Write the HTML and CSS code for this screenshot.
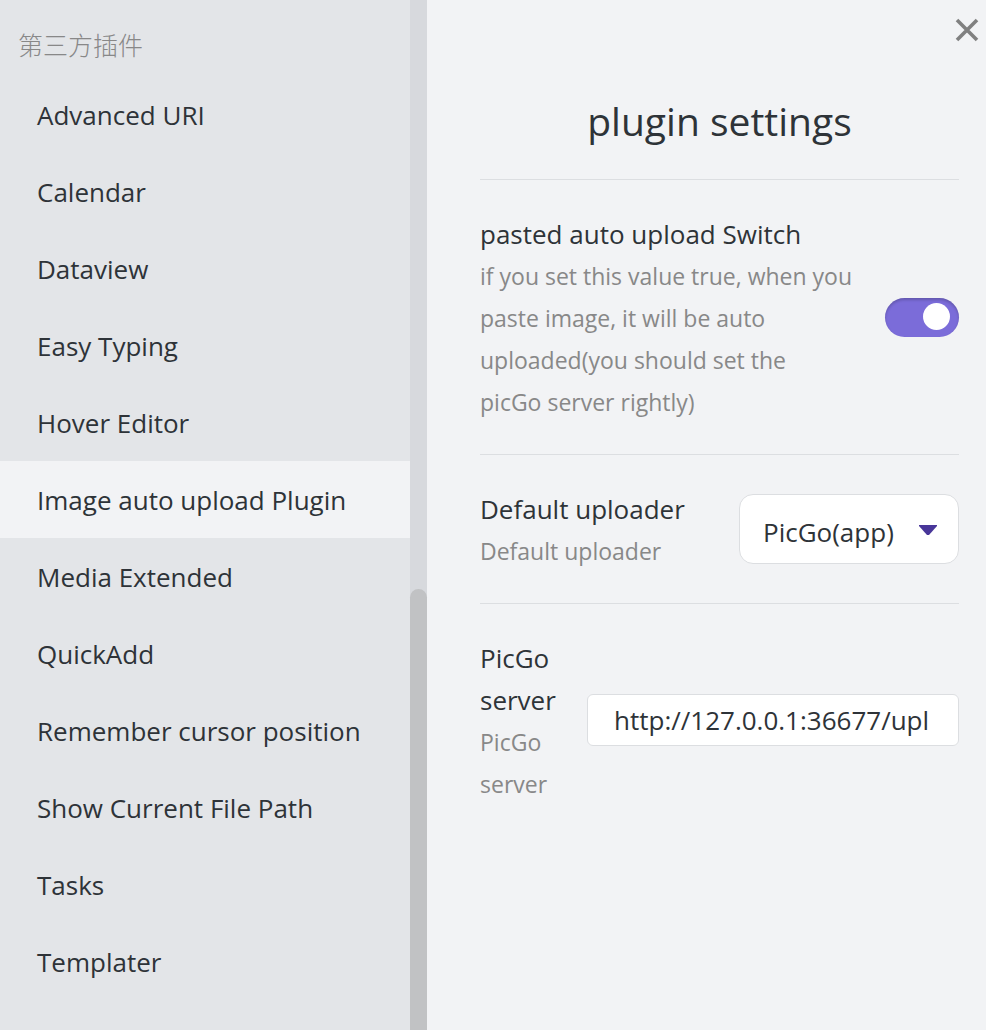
FILE: index.html
```html
<!DOCTYPE html>
<html lang="en">
<head>
<meta charset="utf-8">
<title>plugin settings</title>
<link rel="stylesheet" href="styles.css">
</head>
<body>
<div class="modal">
  <nav class="sidebar">
    <h2 class="group-title">第三方插件</h2>
    <a class="tab" href="#">Advanced URI</a>
    <a class="tab" href="#">Calendar</a>
    <a class="tab" href="#">Dataview</a>
    <a class="tab" href="#">Easy Typing</a>
    <a class="tab" href="#">Hover Editor</a>
    <a class="tab active" href="#">Image auto upload Plugin</a>
    <a class="tab" href="#">Media Extended</a>
    <a class="tab" href="#">QuickAdd</a>
    <a class="tab" href="#">Remember cursor position</a>
    <a class="tab" href="#">Show Current File Path</a>
    <a class="tab" href="#">Tasks</a>
    <a class="tab" href="#">Templater</a>
  </nav>
  <div class="scrollbar"><div class="thumb"></div></div>
  <main class="content">
    <button class="close" aria-label="Close">
      <svg width="24" height="24" viewBox="0 0 24 24"><path d="M2 2L22 22M22 2L2 22" stroke="#808080" stroke-width="3.6" fill="none"/></svg>
    </button>
    <h1 class="title">plugin settings</h1>
    <section class="setting">
      <div class="info">
        <label class="name" for="switch">pasted auto upload Switch</label>
        <p class="desc">if you set this value true, when you paste image, it will be auto uploaded(you should set the<br>picGo server rightly)</p>
      </div>
      <input class="toggle" id="switch" type="checkbox" checked>
    </section>
    <section class="setting">
      <div class="info">
        <label class="name" for="uploader">Default uploader</label>
        <p class="desc">Default uploader</p>
      </div>
      <div class="dropdown">
        <select class="select" id="uploader"><option>PicGo(app)</option></select>
        <svg class="caret" width="20" height="12" viewBox="0 0 20 12"><path d="M1 1H19V2L11 11H9L1 2Z" fill="#483699"/></svg>
      </div>
    </section>
    <section class="setting">
      <div class="info">
        <label class="name" for="server">PicGo server</label>
        <p class="desc">PicGo server</p>
      </div>
      <input class="text" id="server" type="text" value="http://127.0.0.1:36677/upload">
    </section>
  </main>
</div>
</body>
</html>
```
FILE: styles.css
```css
* { box-sizing: border-box; }
body {
  margin: 0;
  font-family: "Open Sans", "Noto Sans", "Noto Sans CJK SC", sans-serif;
  font-size: 26px;
  line-height: 42px;
  color: #2e3338;
  background: #f2f3f5;
}
.modal { display: flex; height: 100vh; overflow: hidden; }
.sidebar { flex: 0 0 410px; padding-top: 24px; background: #e3e5e8; }
.group-title {
  margin: 0 0 10px;
  padding-left: 18px;
  font-size: 25px;
  font-weight: 300;
  color: #888888;
}
.tab {
  display: block;
  padding: 18px 0 17px 37px;
  color: inherit;
  text-decoration: none;
  white-space: nowrap;
}
.active { background: #f2f3f5; }
.scrollbar {
  flex: 0 0 17px;
  display: flex;
  align-items: flex-end;
  background: #d7d9dd;
}
.thumb { width: 100%; height: 441px; border-radius: 9px 9px 0 0; background: #c1c2c4; }
.content { position: relative; flex: 1; min-width: 0; padding: 87px 27px 0 53px; }
.close {
  position: absolute;
  top: 18px;
  right: 7px;
  padding: 0;
  border: 0;
  background: none;
  line-height: 0;
}
.title {
  margin: 0 0 25px;
  font-size: 39px;
  font-weight: 400;
  line-height: 67px;
  text-align: center;
}
.setting {
  display: flex;
  align-items: center;
  padding: 31px 0;
  border-top: 1px solid #dcdee1;
}
.info { flex: 1; min-width: 0; margin-right: 30px; padding-top: 2px; }
.name { display: block; }
.desc { margin: 0; font-size: 23px; color: #888888; }
.toggle {
  appearance: none;
  flex: none;
  display: flex;
  align-items: center;
  justify-content: flex-end;
  width: 74px;
  height: 39px;
  margin: 0;
  padding: 0 9px 2px;
  border-radius: 20px;
  background: #7b6cd9;
  box-shadow: inset 0 2px 3px rgba(0, 0, 0, 0.2);
}
.toggle::before { content: ""; width: 27px; height: 27px; border-radius: 50%; background: #fff; }
.dropdown { position: relative; flex: none; }
.select {
  appearance: none;
  display: block;
  width: 220px;
  height: 70px;
  padding: 5px 24px 0 23px;
  border: 1px solid #dcdee1;
  border-radius: 14px;
  background: #fff;
  font: inherit;
  color: inherit;
}
.caret { position: absolute; right: 21px; top: 30px; pointer-events: none; }
.text {
  flex: none;
  width: 372px;
  height: 52px;
  padding: 0 29px 0 26px;
  border: 1px solid #dcdee1;
  border-radius: 6px;
  background: #fff;
  font: inherit;
  color: inherit;
}
```
